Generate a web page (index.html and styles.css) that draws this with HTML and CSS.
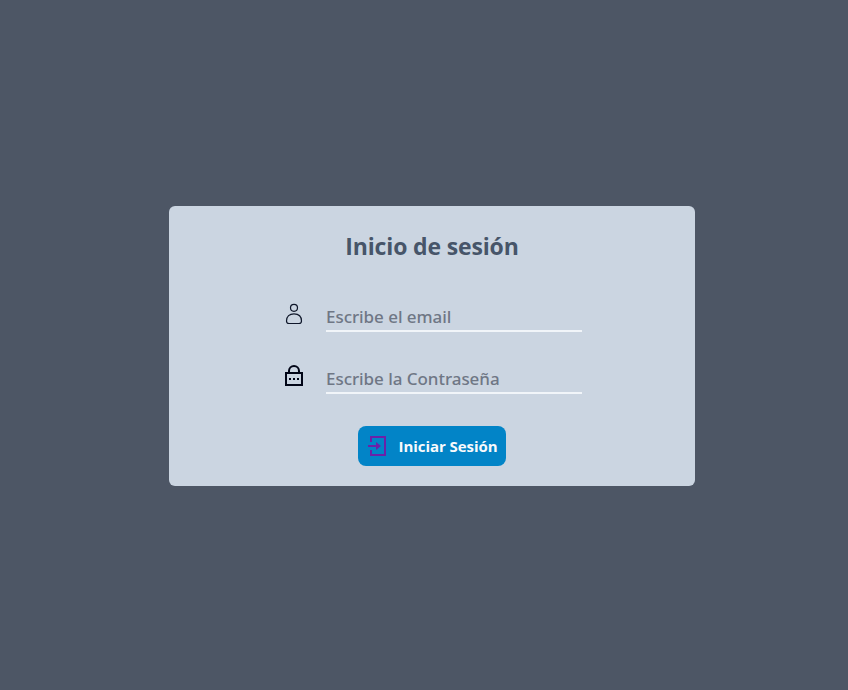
FILE: index.html
```html
<!DOCTYPE html>
<html lang="es">
<head>
<meta charset="utf-8">
<title>Inicio de sesión</title>
<link rel="stylesheet" href="styles.css">
</head>
<body>
<main class="page">
  <form class="card">
    <h1 class="title">Inicio de sesión</h1>
    <label class="field">
      <svg class="icon" viewBox="0 0 24 24" fill="none" stroke="#0f172a" stroke-width="1.2">
        <circle cx="12" cy="5.8" r="3.5"/>
        <path d="M7 21.500h10c1.600 0 2.500-.9 2.500-2.500 0-4.600-3-7.200-7.500-7.200s-7.500 2.600-7.500 7.200c0 1.600.9 2.500 2.500 2.500z"/>
      </svg>
      <input class="input email" type="text" placeholder="Escribe el email">
    </label>
    <label class="field">
      <svg class="icon" viewBox="0 0 24 24" fill="none" stroke="#020617" stroke-width="2">
        <path d="M4 9h16v12H4zM7 9V7a5 5 0 0 1 10 0v2"/>
        <path d="M7 15h2M11 15h2M15 15h2"/>
      </svg>
      <input class="input password" type="password" placeholder="Escribe la Contraseña">
    </label>
    <button class="submit" type="button">
      <svg class="enter" viewBox="0 0 24 24" fill="none" stroke="#6b21a8" stroke-width="2">
        <path d="M5 8V3h14v18H5v-5M2 12h10"/>
        <path d="M10 8l5 4-5 4z" fill="#6b21a8" stroke="none"/>
      </svg>
      <span class="label">Iniciar Sesión</span>
    </button>
  </form>
</main>
</body>
</html>
```
FILE: styles.css
```css
* { box-sizing: border-box; }
body { margin: 0; background: #4d5665; font-family: "Open Sans", "Noto Sans", sans-serif; overflow: hidden; }
.page { height: 690px; padding: 2px 0 0 16px; display: flex; align-items: center; justify-content: center; }
.card { width: 526px; height: 280px; padding-top: 24px; border-radius: 6px; background: #cbd5e1; display: flex; flex-direction: column; align-items: center; }
.title { margin: 0 0 32px; font-size: 23px; line-height: 32px; font-weight: 700; letter-spacing: -0.15px; color: #475569; white-space: nowrap; }
.field { display: flex; align-items: flex-start; width: 300px; height: 38px; margin-bottom: 24px; }
.icon { width: 24px; height: 24px; margin: 8px 20px 0 0; flex: none; }
.input { width: 256px; height: 38px; padding: 10px 0 2px; border: 0; border-bottom: 2px solid #f1f5f9; background: transparent; font: 500 17px/24px "Noto Sans", "Open Sans", sans-serif; letter-spacing: -0.05px; color: #334155; outline: 0; }
.input::placeholder { color: #6f7785; opacity: 1; }
.field + .submit { margin-top: 8px; }
.submit { width: 148px; height: 40px; padding: 0 0 0 8px; border: 0; border-radius: 8px; background: #0284c7; display: flex; align-items: center; }
.enter { width: 24px; height: 24px; margin-right: 8.500px; flex: none; }
.label { font: 700 15px/24px "Open Sans", "Noto Sans", sans-serif; letter-spacing: -0.05px; color: #f8fafc; white-space: nowrap; }
```
